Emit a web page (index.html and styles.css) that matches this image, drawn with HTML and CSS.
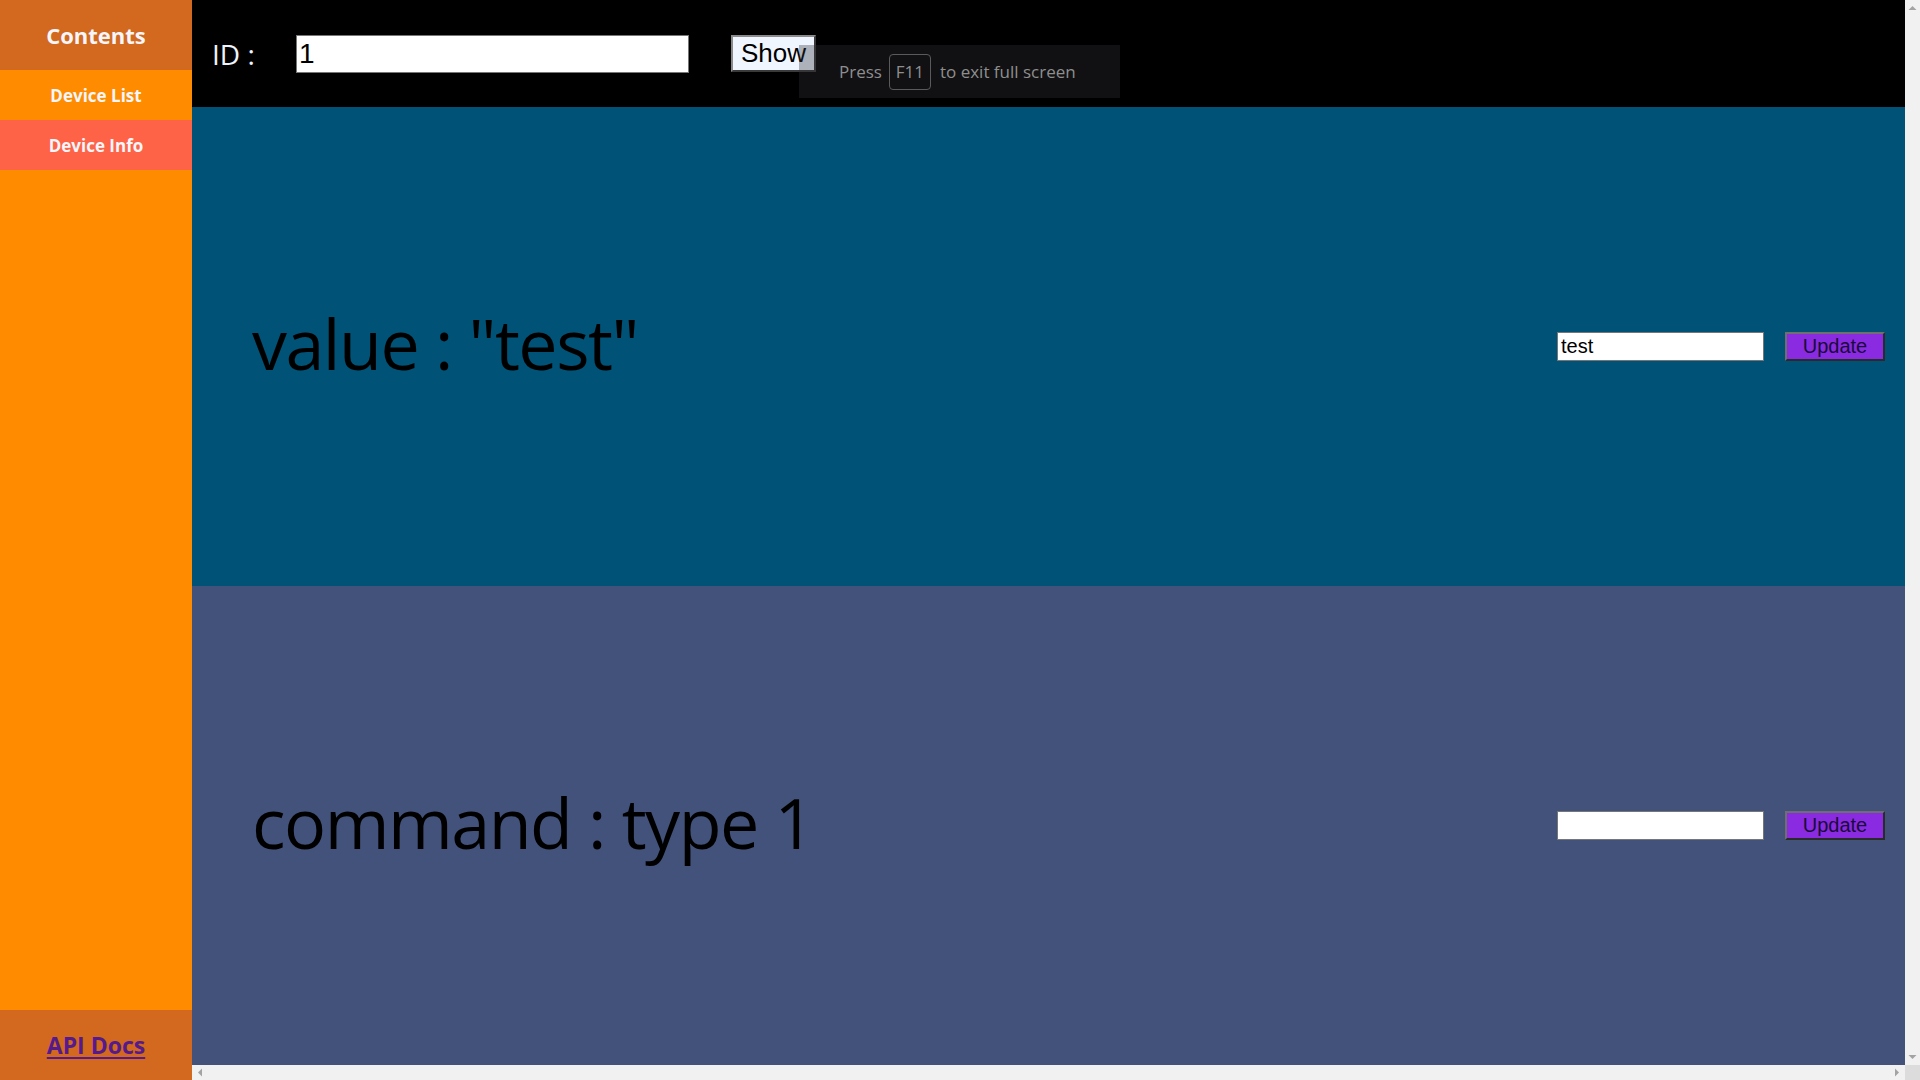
FILE: index.html
```html
<!DOCTYPE html>
<html>
<head>
<meta charset="utf-8">
<title>Device Info</title>
<link rel="stylesheet" href="styles.css">
</head>
<body>
<div class="app">
  <aside class="sidebar">
    <div class="side-head">Contents</div>
    <a class="nav-item" href="#">Device List</a>
    <a class="nav-item active" href="#">Device Info</a>
    <div class="side-fill"></div>
    <div class="side-foot"><a class="api-link" href="#">API Docs</a></div>
  </aside>
  <main class="main">
    <div class="content">
      <div class="topbar">
        <span class="id-label">ID :</span>
        <input class="id-input" type="text" value="1">
        <button class="show-btn">Show</button>
      </div>
      <section class="row row-value">
        <div class="row-text">value : "test"</div>
        <input class="row-input" type="text" value="test">
        <button class="row-btn">Update</button>
      </section>
      <section class="row row-command">
        <div class="row-text">command : type 1</div>
        <input class="row-input" type="text" value="">
        <button class="row-btn">Update</button>
      </section>
    </div>
    <div class="vscroll">
      <svg class="arr" width="15" height="15" viewBox="0 0 15 15"><polygon points="3.5,10 11.5,10 7.5,6" fill="#a3a3a3"/></svg>
      <svg class="arr" width="15" height="15" viewBox="0 0 15 15"><polygon points="3.5,5 11.5,5 7.5,9" fill="#a3a3a3"/></svg>
    </div>
    <div class="hscroll">
      <svg class="arr" width="15" height="15" viewBox="0 0 15 15"><polygon points="10,3.5 10,11.5 6,7.5" fill="#a3a3a3"/></svg>
      <svg class="arr" width="15" height="15" viewBox="0 0 15 15"><polygon points="5,3.5 5,11.5 9,7.5" fill="#a3a3a3"/></svg>
    </div>
    <div class="corner"></div>
  </main>
</div>
<div class="fs-toast">Press <span class="key">F11</span> to exit full screen</div>
</body>
</html>
```

FILE: styles.css
```css
html, body {
  margin: 0;
  padding: 0;
  height: 100%;
  overflow: hidden;
}
body {
  font-family: "Open Sans", "DejaVu Sans", sans-serif;
}
.app {
  display: flex;
  height: 100vh;
}
.sidebar {
  width: 192px;
  flex: none;
  display: flex;
  flex-direction: column;
  background: #ff8c00;
}
.side-head {
  height: 70px;
  background: #d2691e;
  color: #f4f6fb;
  font-weight: 700;
  font-size: 22px;
  display: flex;
  align-items: center;
  justify-content: center;
}
.nav-item {
  height: 50px;
  display: flex;
  align-items: center;
  justify-content: center;
  color: #f4f6fb;
  font-weight: 700;
  font-size: 17px;
  text-decoration: none;
  background: #ff8c00;
}
.nav-item.active {
  background: #ff6347;
}
.side-fill {
  flex: 1;
}
.side-foot {
  height: 70px;
  background: #d2691e;
  display: flex;
  align-items: center;
  justify-content: center;
}
.api-link {
  color: #551a8b;
  font-weight: 700;
  font-size: 23px;
  text-decoration: underline;
  text-underline-offset: 3px;
  text-decoration-thickness: 2px;
}
.main {
  flex: 1;
  display: grid;
  grid-template-columns: 1fr 15px;
  grid-template-rows: 1fr 15px;
  min-width: 0;
}
.content {
  display: flex;
  flex-direction: column;
  min-height: 0;
}
.vscroll {
  background: #f1f1f1;
  display: flex;
  flex-direction: column;
  justify-content: space-between;
}
.hscroll {
  background: #f1f1f1;
  display: flex;
  justify-content: space-between;
}
.arr {
  display: block;
  flex: none;
}
.corner {
  background: #dcdcdc;
}
.topbar {
  height: 107px;
  flex: none;
  background: #000;
  display: flex;
  align-items: center;
  padding-left: 20px;
}
.id-label {
  color: #eef3fc;
  font-size: 28px;
  width: 84px;
  font-weight: 400;
}
.id-input {
  box-sizing: border-box;
  width: 393px;
  height: 38px;
  font-family: "Liberation Sans", Arial, sans-serif;
  font-size: 28px;
  padding: 0 2px;
  border: 1px solid #767676;
  background: #fff;
  color: #000;
  margin: 0;
}
.show-btn {
  box-sizing: border-box;
  margin: 0 0 0 42px;
  width: 85px;
  height: 37px;
  padding: 0;
  font-family: "Liberation Sans", Arial, sans-serif;
  font-size: 26px;
  color: #000;
  background: #f0f6ff;
  border: 2px solid;
  border-color: #8a8a8a #3a3a3a #3a3a3a #8a8a8a;
}
.row {
  flex: 1;
  display: flex;
  align-items: center;
  padding: 0 20px 0 60px;
}
.row-value {
  background: #005277;
}
.row-command {
  background: #43527a;
}
.row-text {
  flex: 1;
  font-size: 70px;
  color: #000;
  letter-spacing: -1.5px;
  white-space: nowrap;
  position: relative;
  top: -4px;
}
.row-input {
  box-sizing: border-box;
  width: 207px;
  height: 29px;
  margin: 0;
  padding: 0 3px;
  font-family: "Liberation Sans", Arial, sans-serif;
  font-size: 20px;
  color: #000;
  background: #fff;
  border: 1px solid #767676;
}
.row-btn {
  box-sizing: border-box;
  width: 100px;
  height: 29px;
  margin: 0 0 0 21px;
  padding: 0;
  font-family: "Liberation Sans", Arial, sans-serif;
  font-size: 20px;
  color: #1a0a3a;
  background: #8a2be2;
  border: 2px solid;
  border-color: #6f6f6f #2a2a2a #2a2a2a #6f6f6f;
}
.fs-toast {
  position: absolute;
  left: 799px;
  top: 45px;
  width: 321px;
  height: 53px;
  box-sizing: border-box;
  padding-left: 40px;
  background: rgba(48, 50, 54, 0.35);
  color: #8e8e8e;
  font-family: "Open Sans", sans-serif;
  font-size: 17px;
  display: flex;
  align-items: center;
  white-space: nowrap;
}
.fs-toast .key {
  display: inline-flex;
  align-items: center;
  justify-content: center;
  box-sizing: border-box;
  width: 42px;
  height: 36px;
  margin: 0 9px 0 7px;
  border: 1px solid #5a5a5a;
  border-radius: 4px;
}
```
